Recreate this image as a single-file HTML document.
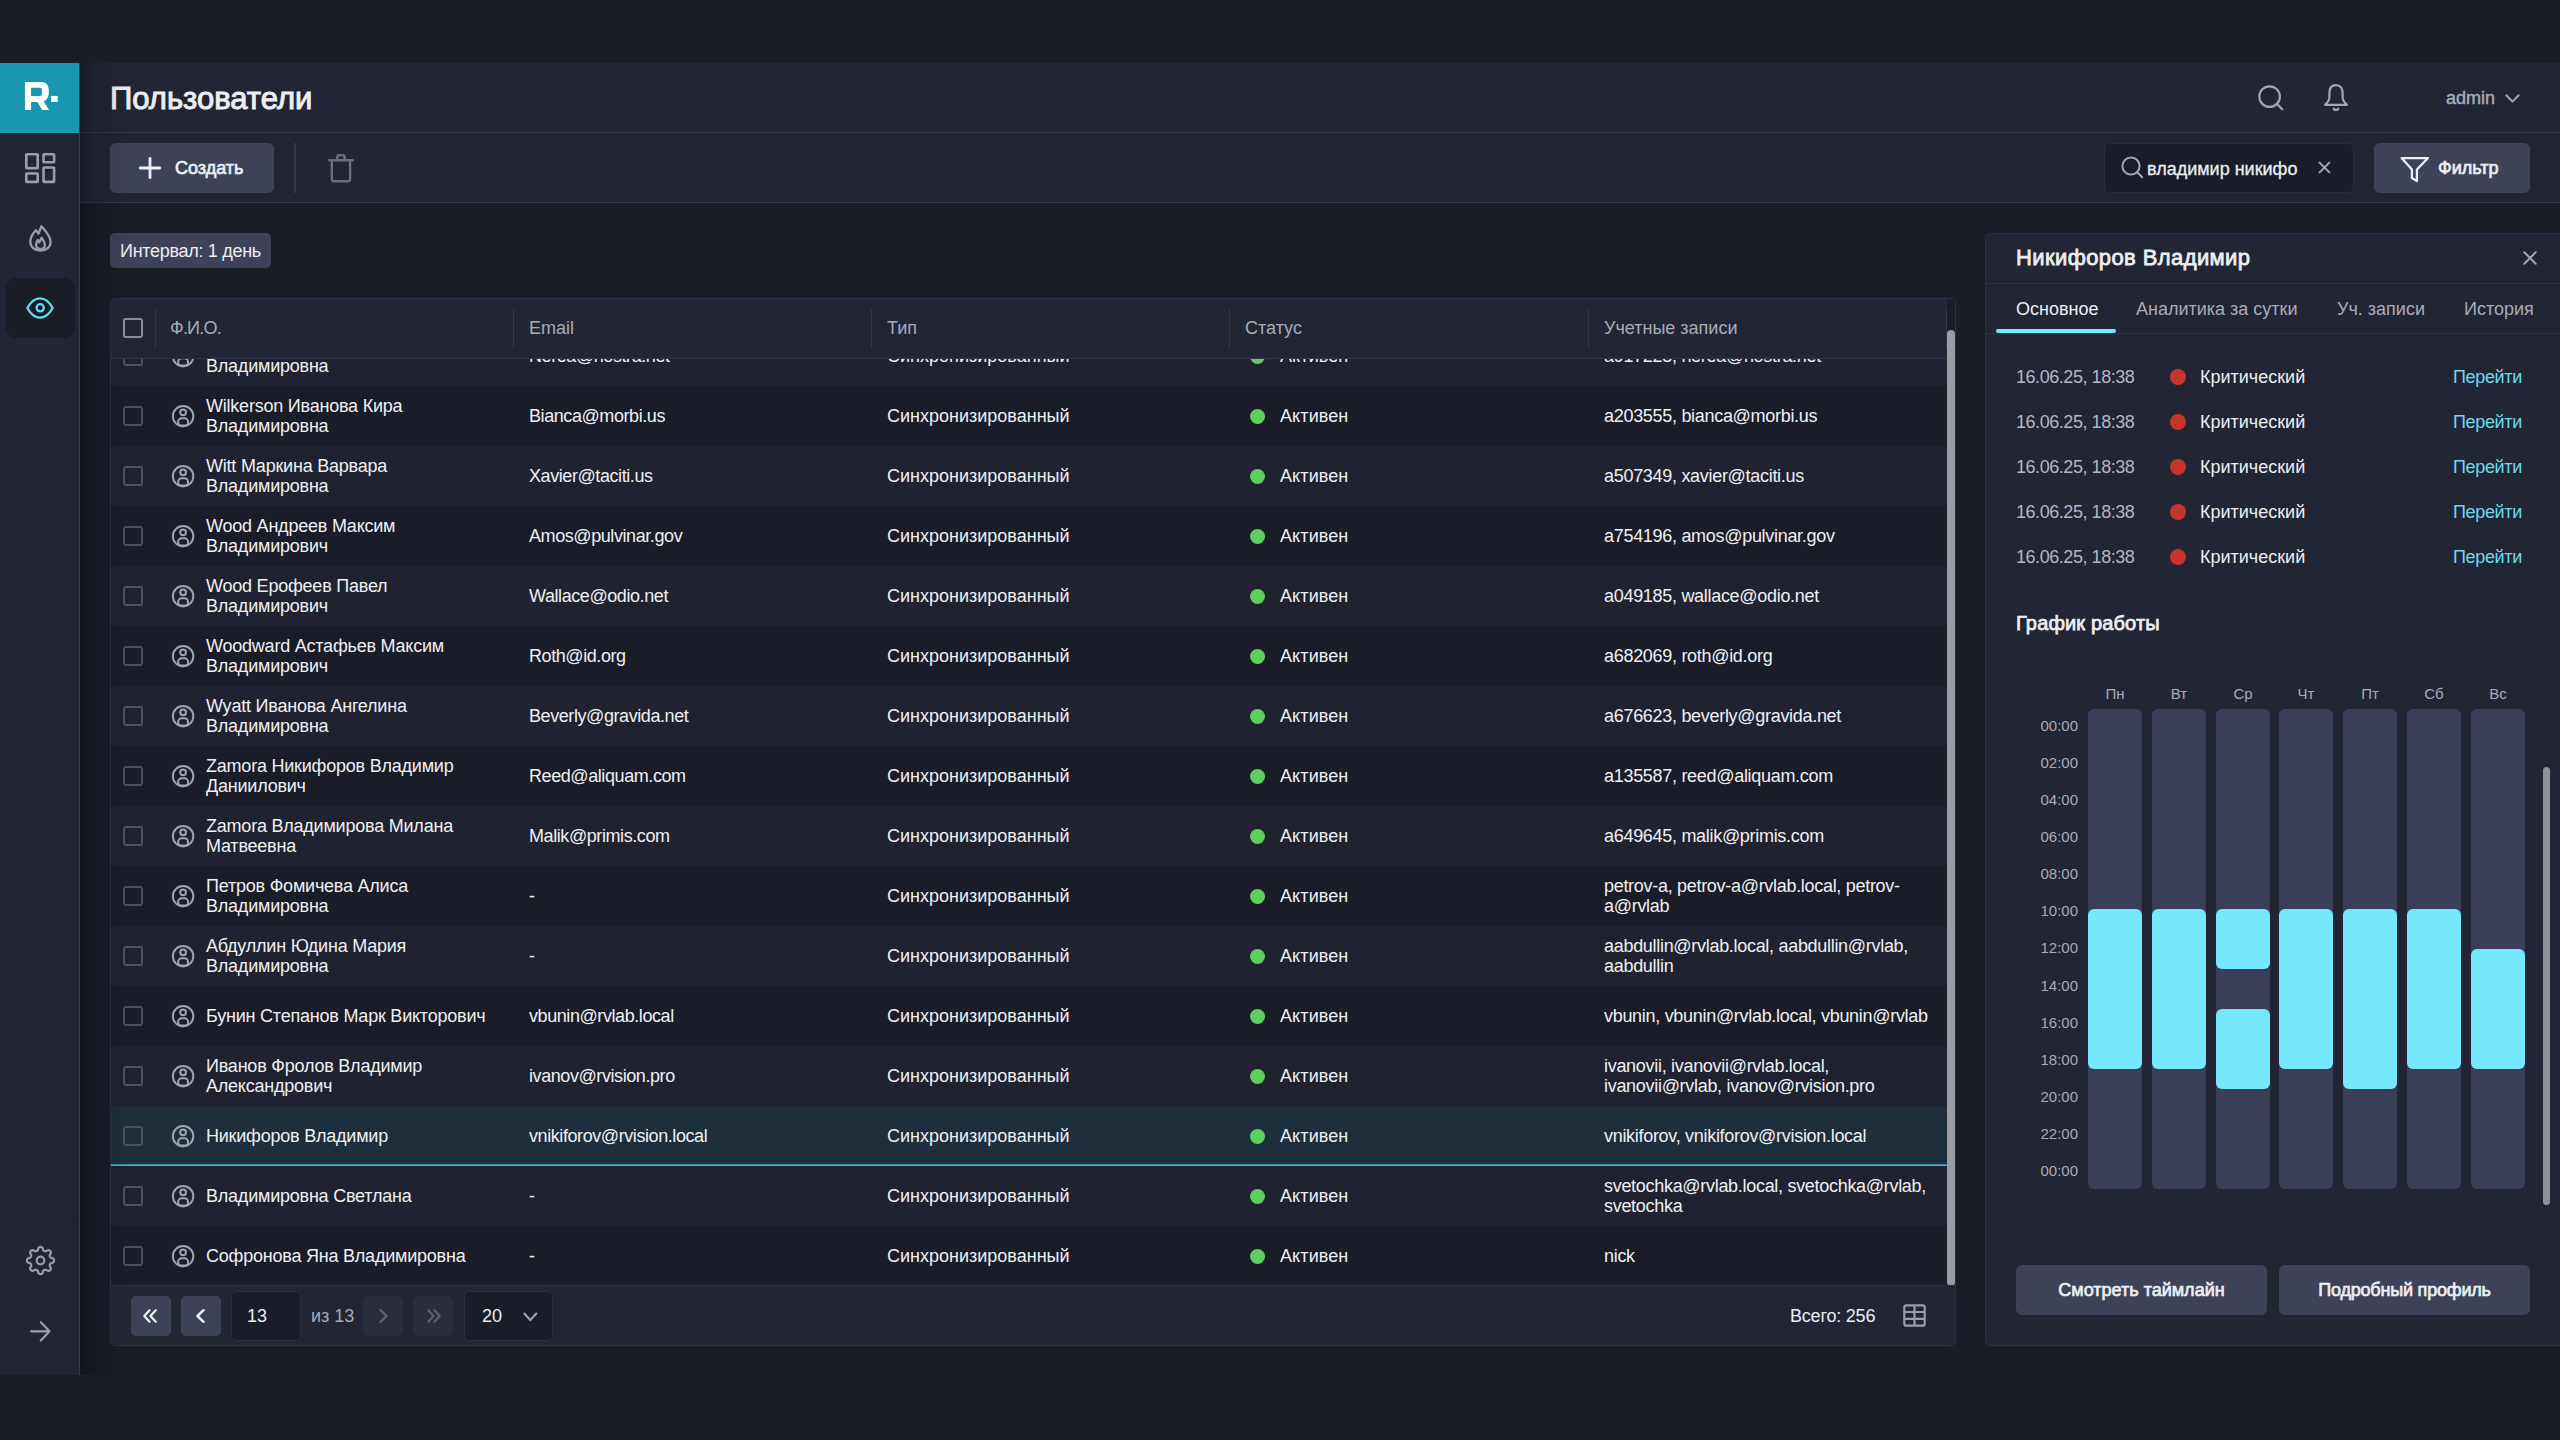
<!DOCTYPE html><html><head><meta charset="utf-8"><style>*{box-sizing:border-box;margin:0;padding:0}
html,body{width:2560px;height:1440px;overflow:hidden;background:#1a1c26;font-family:"Liberation Sans",sans-serif;color:#eceef2}
.abs{position:absolute}
svg{position:absolute;overflow:visible}
.t{position:absolute;white-space:nowrap;line-height:1}
#side{left:0;top:63px;width:80px;height:1312px;background:#222533;border-right:1px solid #363b52}
#logo{left:0;top:63px;width:79px;height:70px;background:#1a97b0}
#hdr{left:80px;top:63px;width:2480px;height:70px;background:#222533;border-bottom:1px solid #323750}
#tb{left:80px;top:133px;width:2480px;height:70px;background:#222533;border-bottom:1px solid #323750}
.btn{position:absolute;background:#3d4259;border-radius:6px}
#tbl{left:110px;top:298px;width:1846px;height:1048px;border:1px solid #2c3044;border-radius:5px;overflow:hidden;background:#20222f}
#rows{position:absolute;left:0;top:28px;width:1836px;height:960px;overflow:hidden}
.row{position:absolute;left:0;width:1836px;height:60px}
.row.d{background:#1a1c27}
.row.l{background:#20222f}
.row.s{background:#1d2e3d}
.row.s:after{content:"";position:absolute;left:0;right:0;bottom:0;height:2px;background:linear-gradient(#2d7f92,#52c4dc)}
.cell{position:absolute;top:0;height:60px;display:flex;align-items:center;font-size:18px;line-height:20px;color:#eff0f3;white-space:nowrap;letter-spacing:-0.2px}
.cb{position:absolute;left:12px;top:20px;width:20px;height:20px;border:2px solid #4d5062;border-radius:3px}
.dot{width:15px;height:15px;border-radius:50%;background:#5fcf5f;margin-right:15px;flex:none}
#thead{position:absolute;left:0;top:0;width:1836px;height:60px;background:#222533;border-bottom:1px solid #323750;z-index:2}
.th{position:absolute;top:0;height:59px;display:flex;align-items:center;font-size:18px;color:#a9abb8}
.vd{position:absolute;top:10px;width:1px;height:40px;background:#323750}
#tfoot{position:absolute;left:0;top:986px;width:1844px;height:60px;background:#222533;border-top:1px solid #2c3044}
#panel{left:1985px;top:233px;width:590px;height:1113px;border:1px solid #2c3044;border-radius:5px;background:#222533}
</style></head><body>
<div class="abs" id="side"></div>
<div class="abs" style="left:0;top:1208px;width:79px;height:20px;background:linear-gradient(rgba(0,0,0,0),rgba(0,0,0,0.07) 70%,rgba(0,0,0,0))"></div>
<div class="abs" id="hdr"></div>
<div class="abs" id="tb"></div>
<div class="abs" id="logo"></div>
<svg style="left:18px;top:76px" width="44" height="40" viewBox="0 0 44 40"><path fill="#fff" fill-rule="evenodd" d="M6.94 6 H23.5 C28.5 6 30.8 9.5 30.8 14.5 V16.5 C30.8 21 28.6 24.3 25.6 25.3 L31.1 34 H24.2 L19.4 26 H13.06 V34 H6.94 Z M13.06 11.7 H21.9 C23.2 11.7 23.9 12.5 23.9 13.7 V17.9 C23.9 19.1 23.2 19.9 21.9 19.9 H13.06 Z"/><rect x="33.2" y="19.9" width="6.5" height="6.1" fill="#fff"/></svg>
<!-- sidebar icons -->
<svg style="left:25px;top:153px" width="30" height="30" viewBox="0 0 30 30" fill="none" stroke="#9a9daa" stroke-width="2.6">
<rect x="1.3" y="1.3" width="11.4" height="13.8" rx="0.6"/><rect x="18.5" y="1.3" width="10.6" height="8" rx="0.6"/>
<rect x="1.3" y="20.5" width="11.4" height="8.4" rx="0.6"/><rect x="18.5" y="14.5" width="10.6" height="14.4" rx="0.6"/>
</svg>
<svg style="left:24px;top:220px" width="34" height="36" viewBox="0 0 34 36" fill="none" stroke="#9a9daa" stroke-width="2.3" stroke-linejoin="round">
<path d="M17.5 6.3 C21.5 11 26.6 16.2 26.6 21.8 C26.6 27.2 22.4 30.6 16.5 30.6 C10.6 30.6 6.3 27.2 6.3 21.8 C6.3 17.2 8.6 13.6 11.9 10.2 L14.4 13.7 Z"/>
<path d="M17.6 17.7 C19.4 19.9 20.8 22.5 20.8 25 C20.8 27.6 19.2 29 16.5 29 C13.8 29 12.1 27.4 12.1 25 C12.1 23.2 12.7 21.6 13.8 20 L15.4 22.2 Z"/>
</svg>
<div class="abs" style="left:6px;top:278px;width:69px;height:60px;background:#1a1c26;border-radius:10px"></div>
<svg style="left:26px;top:297px" width="28" height="22" viewBox="0 0 28 22" fill="none" stroke="#5fdcf2" stroke-width="2.3">
<path d="M1.3 11 C5 4.3 9.2 1.3 14 1.3 C18.8 1.3 23 4.3 26.7 11 C23 17.7 18.8 20.7 14 20.7 C9.2 20.7 5 17.7 1.3 11 Z"/>
<circle cx="14.2" cy="10.8" r="3.6"/>
</svg>
<svg style="left:25px;top:1245px" width="31" height="31" viewBox="-15.5 -15.5 31 31" fill="none" stroke="#9a9daa" stroke-width="2.2" stroke-linejoin="round">
<path d="M0.00 -13.60 L0.53 -13.54 L1.05 -13.37 L1.55 -13.08 L2.00 -12.63 L2.32 -11.67 L2.57 -10.70 L2.89 -10.23 L3.21 -9.88 L3.55 -9.61 L3.90 -9.42 L4.29 -9.31 L4.72 -9.25 L5.19 -9.28 L5.75 -9.39 L6.61 -9.89 L7.52 -10.35 L8.15 -10.34 L8.71 -10.20 L9.20 -9.95 L9.62 -9.62 L9.95 -9.20 L10.20 -8.71 L10.34 -8.15 L10.35 -7.52 L9.89 -6.61 L9.39 -5.75 L9.28 -5.19 L9.25 -4.72 L9.31 -4.29 L9.42 -3.90 L9.61 -3.55 L9.88 -3.21 L10.23 -2.89 L10.70 -2.57 L11.67 -2.32 L12.63 -2.00 L13.08 -1.55 L13.37 -1.05 L13.54 -0.53 L13.60 0.00 L13.54 0.53 L13.37 1.05 L13.08 1.55 L12.63 2.00 L11.67 2.32 L10.70 2.57 L10.23 2.89 L9.88 3.21 L9.61 3.55 L9.42 3.90 L9.31 4.29 L9.25 4.72 L9.28 5.19 L9.39 5.75 L9.89 6.61 L10.35 7.52 L10.34 8.15 L10.20 8.71 L9.95 9.20 L9.62 9.62 L9.20 9.95 L8.71 10.20 L8.15 10.34 L7.52 10.35 L6.61 9.89 L5.75 9.39 L5.19 9.28 L4.72 9.25 L4.29 9.31 L3.90 9.42 L3.55 9.61 L3.21 9.88 L2.89 10.23 L2.57 10.70 L2.32 11.67 L2.00 12.63 L1.55 13.08 L1.05 13.37 L0.53 13.54 L0.00 13.60 L-0.53 13.54 L-1.05 13.37 L-1.55 13.08 L-2.00 12.63 L-2.32 11.67 L-2.57 10.70 L-2.89 10.23 L-3.21 9.88 L-3.55 9.61 L-3.90 9.42 L-4.29 9.31 L-4.72 9.25 L-5.19 9.28 L-5.75 9.39 L-6.61 9.89 L-7.52 10.35 L-8.15 10.34 L-8.71 10.20 L-9.20 9.95 L-9.62 9.62 L-9.95 9.20 L-10.20 8.71 L-10.34 8.15 L-10.35 7.52 L-9.89 6.61 L-9.39 5.75 L-9.28 5.19 L-9.25 4.72 L-9.31 4.29 L-9.42 3.90 L-9.61 3.55 L-9.88 3.21 L-10.23 2.89 L-10.70 2.57 L-11.67 2.32 L-12.63 2.00 L-13.08 1.55 L-13.37 1.05 L-13.54 0.53 L-13.60 0.00 L-13.54 -0.53 L-13.37 -1.05 L-13.08 -1.55 L-12.63 -2.00 L-11.67 -2.32 L-10.70 -2.57 L-10.23 -2.89 L-9.88 -3.21 L-9.61 -3.55 L-9.42 -3.90 L-9.31 -4.29 L-9.25 -4.72 L-9.28 -5.19 L-9.39 -5.75 L-9.89 -6.61 L-10.35 -7.52 L-10.34 -8.15 L-10.20 -8.71 L-9.95 -9.20 L-9.62 -9.62 L-9.20 -9.95 L-8.71 -10.20 L-8.15 -10.34 L-7.52 -10.35 L-6.61 -9.89 L-5.75 -9.39 L-5.19 -9.28 L-4.72 -9.25 L-4.29 -9.31 L-3.90 -9.42 L-3.55 -9.61 L-3.21 -9.88 L-2.89 -10.23 L-2.57 -10.70 L-2.32 -11.67 L-2.00 -12.63 L-1.55 -13.08 L-1.05 -13.37 L-0.53 -13.54 L-0.00 -13.60 Z"/>
<circle cx="0" cy="0" r="3.8"/>
</svg>
<svg style="left:30px;top:1321px" width="21" height="21" viewBox="0 0 21 21" fill="none" stroke="#9a9daa" stroke-width="2.2" stroke-linecap="round" stroke-linejoin="round">
<path d="M1.2 10.3 H19.5 M10.8 1.3 L19.6 10.3 L10.8 19.6"/>
</svg>
<!-- header -->
<div class="t" style="left:110px;top:83px;font-size:31px;font-weight:400;color:#eceef2;-webkit-text-stroke:1px #eceef2;letter-spacing:0px">Пользователи</div>
<svg style="left:2257px;top:84px" width="28" height="28" viewBox="0 0 28 28" fill="none" stroke="#a3a5b2" stroke-width="2.2" stroke-linecap="round">
<circle cx="12.6" cy="12.6" r="10.3"/><path d="M20 20 L25.2 25.2"/>
</svg>
<svg style="left:2322px;top:83px" width="28" height="30" viewBox="0 0 28 30" fill="none" stroke="#a3a5b2" stroke-width="2.2" stroke-linejoin="round" stroke-linecap="round">
<path d="M14 2.2 C9.6 2.2 7.4 5.4 7.4 10.2 V14.2 C7.4 17 6.2 19 3 21.8 H25 C21.8 19 20.6 17 20.6 14.2 V10.2 C20.6 5.4 18.4 2.2 14 2.2 Z"/>
<path d="M11.6 25.6 C12.6 27.4 15.4 27.4 16.4 25.6"/>
</svg>
<div class="t" style="left:2446px;top:89px;font-size:18px;font-weight:400;color:#a9abb8;-webkit-text-stroke:0.45px #a9abb8">admin</div>
<svg style="left:2505px;top:94px" width="15" height="9" viewBox="0 0 15 9" fill="none" stroke="#a3a5b2" stroke-width="2" stroke-linecap="round" stroke-linejoin="round">
<path d="M1.3 1.3 L7.5 7.6 L13.7 1.3"/>
</svg>
<!-- toolbar -->
<div class="btn" style="left:110px;top:143px;width:164px;height:50px"></div>
<svg style="left:139px;top:157px" width="22" height="22" viewBox="0 0 22 22" fill="none" stroke="#eceef2" stroke-width="2.8" stroke-linecap="round">
<path d="M11 1.3 V20.7 M1.3 11 H20.7"/>
</svg>
<div class="t" style="left:175px;top:159px;font-size:18px;font-weight:400;color:#eceef2;-webkit-text-stroke:0.7px #eceef2">Создать</div>
<div class="abs" style="left:294px;top:143px;width:2px;height:50px;background:#323750"></div>
<svg style="left:327px;top:153px" width="28" height="30" viewBox="0 0 28 30" fill="none" stroke="#6b6e7e" stroke-width="2.4" stroke-linejoin="round" stroke-linecap="round">
<path d="M2.2 7.2 H25.8 M10.3 7.2 V4 C10.3 2.6 10.9 2.2 12 2.2 H16 C17.1 2.2 17.7 2.6 17.7 4 V7.2 M4.8 7.2 V26 C4.8 27.4 5.5 28.2 6.9 28.2 H21 C22.4 28.2 23.1 27.4 23.1 26 V7.2"/>
</svg>
<div class="abs" style="left:2104px;top:143px;width:250px;height:50px;background:#1a1c27;border:1px solid #2a2d3c;border-radius:5px"></div>
<svg style="left:2121px;top:156px" width="23" height="23" viewBox="0 0 23 23" fill="none" stroke="#a3a5b2" stroke-width="2" stroke-linecap="round">
<circle cx="10" cy="10" r="8.6"/><path d="M16.2 16.2 L21.2 21.2"/>
</svg>
<div class="t" style="left:2147px;top:160px;font-size:18px;color:#eceef2;-webkit-text-stroke:0.3px #eceef2">владимир никифо</div>
<svg style="left:2318px;top:161px" width="13" height="13" viewBox="0 0 13 13" fill="none" stroke="#a3a5b2" stroke-width="2" stroke-linecap="round">
<path d="M1.6 1.6 L11.4 11.4 M11.4 1.6 L1.6 11.4"/>
</svg>
<div class="btn" style="left:2374px;top:143px;width:156px;height:50px"></div>
<svg style="left:2400px;top:156px" width="29" height="27" viewBox="0 0 29 27" fill="none" stroke="#eceef2" stroke-width="2.3" stroke-linejoin="round">
<path d="M1.6 2.05 H28 L16.9 13.5 V25.1 L11.9 22 V13.5 Z"/>
</svg>
<div class="t" style="left:2438px;top:159px;font-size:18px;font-weight:400;color:#eceef2;-webkit-text-stroke:0.7px #eceef2">Фильтр</div>
<!-- chip -->
<div class="abs" style="left:110px;top:233px;width:161px;height:35px;background:#3d4259;border-radius:5px"></div>
<div class="t" style="left:120px;top:242px;font-size:18px;color:#eceef2;letter-spacing:-0.3px">Интервал: 1 день</div>

<div class="abs" id="tbl">
<div id="rows" style="top:0;height:986px">
<div class="row l" style="top:27px">
<div class="cb"></div><svg style="left:61px;top:19px" width="23" height="23" viewBox="0 0 23 23" fill="none" stroke="#a0a3b1" stroke-width="2"><circle cx="11.1" cy="11.2" r="10.2"/><circle cx="11.1" cy="7.3" r="2.9"/><rect x="6.1" y="13.3" width="10" height="7.2" rx="3.6"/></svg>
<div class="cell" style="left:95px;letter-spacing:-0.22px">Whitney Романова Ольга<br>Владимировна</div>
<div class="cell" style="left:418px;letter-spacing:-0.42px">Nerea@nostra.net</div>
<div class="cell" style="left:776px;letter-spacing:0">Синхронизированный</div>
<div class="cell" style="left:1139px;letter-spacing:0.1px"><span class="dot"></span>Активен</div>
<div class="cell" style="left:1493px;letter-spacing:-0.3px">a917223, nerea@nostra.net</div>
</div>
<div class="row d" style="top:87px">
<div class="cb"></div><svg style="left:61px;top:19px" width="23" height="23" viewBox="0 0 23 23" fill="none" stroke="#a0a3b1" stroke-width="2"><circle cx="11.1" cy="11.2" r="10.2"/><circle cx="11.1" cy="7.3" r="2.9"/><rect x="6.1" y="13.3" width="10" height="7.2" rx="3.6"/></svg>
<div class="cell" style="left:95px;letter-spacing:-0.22px">Wilkerson Иванова Кира<br>Владимировна</div>
<div class="cell" style="left:418px;letter-spacing:-0.42px">Bianca@morbi.us</div>
<div class="cell" style="left:776px;letter-spacing:0">Синхронизированный</div>
<div class="cell" style="left:1139px;letter-spacing:0.1px"><span class="dot"></span>Активен</div>
<div class="cell" style="left:1493px;letter-spacing:-0.3px">a203555, bianca@morbi.us</div>
</div>
<div class="row l" style="top:147px">
<div class="cb"></div><svg style="left:61px;top:19px" width="23" height="23" viewBox="0 0 23 23" fill="none" stroke="#a0a3b1" stroke-width="2"><circle cx="11.1" cy="11.2" r="10.2"/><circle cx="11.1" cy="7.3" r="2.9"/><rect x="6.1" y="13.3" width="10" height="7.2" rx="3.6"/></svg>
<div class="cell" style="left:95px;letter-spacing:-0.22px">Witt Маркина Варвара<br>Владимировна</div>
<div class="cell" style="left:418px;letter-spacing:-0.42px">Xavier@taciti.us</div>
<div class="cell" style="left:776px;letter-spacing:0">Синхронизированный</div>
<div class="cell" style="left:1139px;letter-spacing:0.1px"><span class="dot"></span>Активен</div>
<div class="cell" style="left:1493px;letter-spacing:-0.3px">a507349, xavier@taciti.us</div>
</div>
<div class="row d" style="top:207px">
<div class="cb"></div><svg style="left:61px;top:19px" width="23" height="23" viewBox="0 0 23 23" fill="none" stroke="#a0a3b1" stroke-width="2"><circle cx="11.1" cy="11.2" r="10.2"/><circle cx="11.1" cy="7.3" r="2.9"/><rect x="6.1" y="13.3" width="10" height="7.2" rx="3.6"/></svg>
<div class="cell" style="left:95px;letter-spacing:-0.22px">Wood Андреев Максим<br>Владимирович</div>
<div class="cell" style="left:418px;letter-spacing:-0.42px">Amos@pulvinar.gov</div>
<div class="cell" style="left:776px;letter-spacing:0">Синхронизированный</div>
<div class="cell" style="left:1139px;letter-spacing:0.1px"><span class="dot"></span>Активен</div>
<div class="cell" style="left:1493px;letter-spacing:-0.3px">a754196, amos@pulvinar.gov</div>
</div>
<div class="row l" style="top:267px">
<div class="cb"></div><svg style="left:61px;top:19px" width="23" height="23" viewBox="0 0 23 23" fill="none" stroke="#a0a3b1" stroke-width="2"><circle cx="11.1" cy="11.2" r="10.2"/><circle cx="11.1" cy="7.3" r="2.9"/><rect x="6.1" y="13.3" width="10" height="7.2" rx="3.6"/></svg>
<div class="cell" style="left:95px;letter-spacing:-0.22px">Wood Ерофеев Павел<br>Владимирович</div>
<div class="cell" style="left:418px;letter-spacing:-0.42px">Wallace@odio.net</div>
<div class="cell" style="left:776px;letter-spacing:0">Синхронизированный</div>
<div class="cell" style="left:1139px;letter-spacing:0.1px"><span class="dot"></span>Активен</div>
<div class="cell" style="left:1493px;letter-spacing:-0.3px">a049185, wallace@odio.net</div>
</div>
<div class="row d" style="top:327px">
<div class="cb"></div><svg style="left:61px;top:19px" width="23" height="23" viewBox="0 0 23 23" fill="none" stroke="#a0a3b1" stroke-width="2"><circle cx="11.1" cy="11.2" r="10.2"/><circle cx="11.1" cy="7.3" r="2.9"/><rect x="6.1" y="13.3" width="10" height="7.2" rx="3.6"/></svg>
<div class="cell" style="left:95px;letter-spacing:-0.22px">Woodward Астафьев Максим<br>Владимирович</div>
<div class="cell" style="left:418px;letter-spacing:-0.42px">Roth@id.org</div>
<div class="cell" style="left:776px;letter-spacing:0">Синхронизированный</div>
<div class="cell" style="left:1139px;letter-spacing:0.1px"><span class="dot"></span>Активен</div>
<div class="cell" style="left:1493px;letter-spacing:-0.3px">a682069, roth@id.org</div>
</div>
<div class="row l" style="top:387px">
<div class="cb"></div><svg style="left:61px;top:19px" width="23" height="23" viewBox="0 0 23 23" fill="none" stroke="#a0a3b1" stroke-width="2"><circle cx="11.1" cy="11.2" r="10.2"/><circle cx="11.1" cy="7.3" r="2.9"/><rect x="6.1" y="13.3" width="10" height="7.2" rx="3.6"/></svg>
<div class="cell" style="left:95px;letter-spacing:-0.22px">Wyatt Иванова Ангелина<br>Владимировна</div>
<div class="cell" style="left:418px;letter-spacing:-0.42px">Beverly@gravida.net</div>
<div class="cell" style="left:776px;letter-spacing:0">Синхронизированный</div>
<div class="cell" style="left:1139px;letter-spacing:0.1px"><span class="dot"></span>Активен</div>
<div class="cell" style="left:1493px;letter-spacing:-0.3px">a676623, beverly@gravida.net</div>
</div>
<div class="row d" style="top:447px">
<div class="cb"></div><svg style="left:61px;top:19px" width="23" height="23" viewBox="0 0 23 23" fill="none" stroke="#a0a3b1" stroke-width="2"><circle cx="11.1" cy="11.2" r="10.2"/><circle cx="11.1" cy="7.3" r="2.9"/><rect x="6.1" y="13.3" width="10" height="7.2" rx="3.6"/></svg>
<div class="cell" style="left:95px;letter-spacing:-0.22px">Zamora Никифоров Владимир<br>Даниилович</div>
<div class="cell" style="left:418px;letter-spacing:-0.42px">Reed@aliquam.com</div>
<div class="cell" style="left:776px;letter-spacing:0">Синхронизированный</div>
<div class="cell" style="left:1139px;letter-spacing:0.1px"><span class="dot"></span>Активен</div>
<div class="cell" style="left:1493px;letter-spacing:-0.3px">a135587, reed@aliquam.com</div>
</div>
<div class="row l" style="top:507px">
<div class="cb"></div><svg style="left:61px;top:19px" width="23" height="23" viewBox="0 0 23 23" fill="none" stroke="#a0a3b1" stroke-width="2"><circle cx="11.1" cy="11.2" r="10.2"/><circle cx="11.1" cy="7.3" r="2.9"/><rect x="6.1" y="13.3" width="10" height="7.2" rx="3.6"/></svg>
<div class="cell" style="left:95px;letter-spacing:-0.22px">Zamora Владимирова Милана<br>Матвеевна</div>
<div class="cell" style="left:418px;letter-spacing:-0.42px">Malik@primis.com</div>
<div class="cell" style="left:776px;letter-spacing:0">Синхронизированный</div>
<div class="cell" style="left:1139px;letter-spacing:0.1px"><span class="dot"></span>Активен</div>
<div class="cell" style="left:1493px;letter-spacing:-0.3px">a649645, malik@primis.com</div>
</div>
<div class="row d" style="top:567px">
<div class="cb"></div><svg style="left:61px;top:19px" width="23" height="23" viewBox="0 0 23 23" fill="none" stroke="#a0a3b1" stroke-width="2"><circle cx="11.1" cy="11.2" r="10.2"/><circle cx="11.1" cy="7.3" r="2.9"/><rect x="6.1" y="13.3" width="10" height="7.2" rx="3.6"/></svg>
<div class="cell" style="left:95px;letter-spacing:-0.22px">Петров Фомичева Алиса<br>Владимировна</div>
<div class="cell" style="left:418px;letter-spacing:-0.42px">-</div>
<div class="cell" style="left:776px;letter-spacing:0">Синхронизированный</div>
<div class="cell" style="left:1139px;letter-spacing:0.1px"><span class="dot"></span>Активен</div>
<div class="cell" style="left:1493px;letter-spacing:-0.3px">petrov-a, petrov-a@rvlab.local, petrov-<br>a@rvlab</div>
</div>
<div class="row l" style="top:627px">
<div class="cb"></div><svg style="left:61px;top:19px" width="23" height="23" viewBox="0 0 23 23" fill="none" stroke="#a0a3b1" stroke-width="2"><circle cx="11.1" cy="11.2" r="10.2"/><circle cx="11.1" cy="7.3" r="2.9"/><rect x="6.1" y="13.3" width="10" height="7.2" rx="3.6"/></svg>
<div class="cell" style="left:95px;letter-spacing:-0.22px">Абдуллин Юдина Мария<br>Владимировна</div>
<div class="cell" style="left:418px;letter-spacing:-0.42px">-</div>
<div class="cell" style="left:776px;letter-spacing:0">Синхронизированный</div>
<div class="cell" style="left:1139px;letter-spacing:0.1px"><span class="dot"></span>Активен</div>
<div class="cell" style="left:1493px;letter-spacing:-0.3px">aabdullin@rvlab.local, aabdullin@rvlab,<br>aabdullin</div>
</div>
<div class="row d" style="top:687px">
<div class="cb"></div><svg style="left:61px;top:19px" width="23" height="23" viewBox="0 0 23 23" fill="none" stroke="#a0a3b1" stroke-width="2"><circle cx="11.1" cy="11.2" r="10.2"/><circle cx="11.1" cy="7.3" r="2.9"/><rect x="6.1" y="13.3" width="10" height="7.2" rx="3.6"/></svg>
<div class="cell" style="left:95px;letter-spacing:-0.22px">Бунин Степанов Марк Викторович</div>
<div class="cell" style="left:418px;letter-spacing:-0.42px">vbunin@rvlab.local</div>
<div class="cell" style="left:776px;letter-spacing:0">Синхронизированный</div>
<div class="cell" style="left:1139px;letter-spacing:0.1px"><span class="dot"></span>Активен</div>
<div class="cell" style="left:1493px;letter-spacing:-0.3px">vbunin, vbunin@rvlab.local, vbunin@rvlab</div>
</div>
<div class="row l" style="top:747px">
<div class="cb"></div><svg style="left:61px;top:19px" width="23" height="23" viewBox="0 0 23 23" fill="none" stroke="#a0a3b1" stroke-width="2"><circle cx="11.1" cy="11.2" r="10.2"/><circle cx="11.1" cy="7.3" r="2.9"/><rect x="6.1" y="13.3" width="10" height="7.2" rx="3.6"/></svg>
<div class="cell" style="left:95px;letter-spacing:-0.22px">Иванов Фролов Владимир<br>Александрович</div>
<div class="cell" style="left:418px;letter-spacing:-0.42px">ivanov@rvision.pro</div>
<div class="cell" style="left:776px;letter-spacing:0">Синхронизированный</div>
<div class="cell" style="left:1139px;letter-spacing:0.1px"><span class="dot"></span>Активен</div>
<div class="cell" style="left:1493px;letter-spacing:-0.3px">ivanovii, ivanovii@rvlab.local,<br>ivanovii@rvlab, ivanov@rvision.pro</div>
</div>
<div class="row s" style="top:807px">
<div class="cb"></div><svg style="left:61px;top:19px" width="23" height="23" viewBox="0 0 23 23" fill="none" stroke="#a0a3b1" stroke-width="2"><circle cx="11.1" cy="11.2" r="10.2"/><circle cx="11.1" cy="7.3" r="2.9"/><rect x="6.1" y="13.3" width="10" height="7.2" rx="3.6"/></svg>
<div class="cell" style="left:95px;letter-spacing:-0.22px">Никифоров Владимир</div>
<div class="cell" style="left:418px;letter-spacing:-0.42px">vnikiforov@rvision.local</div>
<div class="cell" style="left:776px;letter-spacing:0">Синхронизированный</div>
<div class="cell" style="left:1139px;letter-spacing:0.1px"><span class="dot"></span>Активен</div>
<div class="cell" style="left:1493px;letter-spacing:-0.3px">vnikiforov, vnikiforov@rvision.local</div>
</div>
<div class="row l" style="top:867px">
<div class="cb"></div><svg style="left:61px;top:19px" width="23" height="23" viewBox="0 0 23 23" fill="none" stroke="#a0a3b1" stroke-width="2"><circle cx="11.1" cy="11.2" r="10.2"/><circle cx="11.1" cy="7.3" r="2.9"/><rect x="6.1" y="13.3" width="10" height="7.2" rx="3.6"/></svg>
<div class="cell" style="left:95px;letter-spacing:-0.22px">Владимировна Светлана</div>
<div class="cell" style="left:418px;letter-spacing:-0.42px">-</div>
<div class="cell" style="left:776px;letter-spacing:0">Синхронизированный</div>
<div class="cell" style="left:1139px;letter-spacing:0.1px"><span class="dot"></span>Активен</div>
<div class="cell" style="left:1493px;letter-spacing:-0.3px">svetochka@rvlab.local, svetochka@rvlab,<br>svetochka</div>
</div>
<div class="row d" style="top:927px">
<div class="cb"></div><svg style="left:61px;top:19px" width="23" height="23" viewBox="0 0 23 23" fill="none" stroke="#a0a3b1" stroke-width="2"><circle cx="11.1" cy="11.2" r="10.2"/><circle cx="11.1" cy="7.3" r="2.9"/><rect x="6.1" y="13.3" width="10" height="7.2" rx="3.6"/></svg>
<div class="cell" style="left:95px;letter-spacing:-0.22px">Софронова Яна Владимировна</div>
<div class="cell" style="left:418px;letter-spacing:-0.42px">-</div>
<div class="cell" style="left:776px;letter-spacing:0">Синхронизированный</div>
<div class="cell" style="left:1139px;letter-spacing:0.1px"><span class="dot"></span>Активен</div>
<div class="cell" style="left:1493px;letter-spacing:-0.3px">nick</div>
</div>
</div>
<div id="thead">
<div class="cb" style="left:12px;top:19px;border-color:#8a8d9c"></div>
<div class="vd" style="left:44px"></div>
<div class="th" style="left:59px;letter-spacing:-0.8px">Ф.И.О.</div>
<div class="vd" style="left:402px"></div>
<div class="th" style="left:418px">Email</div>
<div class="vd" style="left:760px"></div>
<div class="th" style="left:776px">Тип</div>
<div class="vd" style="left:1118px"></div>
<div class="th" style="left:1134px">Статус</div>
<div class="vd" style="left:1477px"></div>
<div class="th" style="left:1493px">Учетные записи</div>
<div class="vd" style="left:1835px"></div>
</div>
<div class="abs" style="left:1836px;top:0;width:8px;height:987px;background:#1a1c26"></div>
<div class="abs" style="left:1836px;top:31px;width:8px;height:956px;background:#9a9ca3;border-radius:4px"></div>
<div id="tfoot"></div>
</div>


<div class="abs" id="panel"></div>
<div class="t" style="left:2016px;top:247px;font-size:22px;font-weight:400;color:#eceef2;-webkit-text-stroke:0.8px #eceef2;letter-spacing:0.4px">Никифоров Владимир</div>
<svg style="left:2523px;top:251px" width="14" height="14" viewBox="0 0 14 14" fill="none" stroke="#a3a5b2" stroke-width="2" stroke-linecap="round"><path d="M1.3 1.3 L12.7 12.7 M12.7 1.3 L1.3 12.7"/></svg>
<div class="abs" style="left:1986px;top:283px;width:574px;height:1px;background:#2f3347"></div>
<div class="t" style="left:2016px;top:300px;font-size:18px;color:#eceef2">Основное</div>
<div class="t" style="left:2136px;top:300px;font-size:18px;color:#a9abb8">Аналитика за сутки</div>
<div class="t" style="left:2337px;top:300px;font-size:18px;color:#a9abb8">Уч. записи</div>
<div class="t" style="left:2464px;top:300px;font-size:18px;color:#a9abb8">История</div>
<div class="abs" style="left:1986px;top:333px;width:574px;height:1px;background:#2f3347"></div>
<div class="abs" style="left:1996px;top:329px;width:120px;height:4px;background:#76e8fd;border-radius:2px"></div>
<div class="t" style="left:2016px;top:368px;font-size:18px;color:#b4b6c1;letter-spacing:-0.45px">16.06.25, 18:38</div>
<div class="abs" style="left:2170px;top:369px;width:16px;height:16px;border-radius:50%;background:#c5352c"></div>
<div class="t" style="left:2200px;top:368px;font-size:18px;color:#eceef2">Критический</div>
<div class="t" style="left:2453px;top:368px;font-size:18px;color:#6ed8f0;letter-spacing:-0.35px">Перейти</div>
<div class="t" style="left:2016px;top:413px;font-size:18px;color:#b4b6c1;letter-spacing:-0.45px">16.06.25, 18:38</div>
<div class="abs" style="left:2170px;top:414px;width:16px;height:16px;border-radius:50%;background:#c5352c"></div>
<div class="t" style="left:2200px;top:413px;font-size:18px;color:#eceef2">Критический</div>
<div class="t" style="left:2453px;top:413px;font-size:18px;color:#6ed8f0;letter-spacing:-0.35px">Перейти</div>
<div class="t" style="left:2016px;top:458px;font-size:18px;color:#b4b6c1;letter-spacing:-0.45px">16.06.25, 18:38</div>
<div class="abs" style="left:2170px;top:459px;width:16px;height:16px;border-radius:50%;background:#c5352c"></div>
<div class="t" style="left:2200px;top:458px;font-size:18px;color:#eceef2">Критический</div>
<div class="t" style="left:2453px;top:458px;font-size:18px;color:#6ed8f0;letter-spacing:-0.35px">Перейти</div>
<div class="t" style="left:2016px;top:503px;font-size:18px;color:#b4b6c1;letter-spacing:-0.45px">16.06.25, 18:38</div>
<div class="abs" style="left:2170px;top:504px;width:16px;height:16px;border-radius:50%;background:#c5352c"></div>
<div class="t" style="left:2200px;top:503px;font-size:18px;color:#eceef2">Критический</div>
<div class="t" style="left:2453px;top:503px;font-size:18px;color:#6ed8f0;letter-spacing:-0.35px">Перейти</div>
<div class="t" style="left:2016px;top:548px;font-size:18px;color:#b4b6c1;letter-spacing:-0.45px">16.06.25, 18:38</div>
<div class="abs" style="left:2170px;top:549px;width:16px;height:16px;border-radius:50%;background:#c5352c"></div>
<div class="t" style="left:2200px;top:548px;font-size:18px;color:#eceef2">Критический</div>
<div class="t" style="left:2453px;top:548px;font-size:18px;color:#6ed8f0;letter-spacing:-0.35px">Перейти</div>
<div class="t" style="left:2016px;top:613px;font-size:20px;font-weight:400;color:#eceef2;-webkit-text-stroke:0.75px #eceef2;letter-spacing:0.15px">График работы</div>
<div class="t" style="left:2088px;width:54px;text-align:center;top:686px;font-size:15px;color:#a9abb8">Пн</div>
<div class="abs" style="left:2088px;top:709px;width:54px;height:480px;background:#3a3e58;border-radius:6px"></div>
<div class="abs" style="left:2088px;top:909px;width:54px;height:160px;background:#76e8fd;border-radius:6px"></div>
<div class="t" style="left:2152px;width:54px;text-align:center;top:686px;font-size:15px;color:#a9abb8">Вт</div>
<div class="abs" style="left:2152px;top:709px;width:54px;height:480px;background:#3a3e58;border-radius:6px"></div>
<div class="abs" style="left:2152px;top:909px;width:54px;height:160px;background:#76e8fd;border-radius:6px"></div>
<div class="t" style="left:2216px;width:54px;text-align:center;top:686px;font-size:15px;color:#a9abb8">Ср</div>
<div class="abs" style="left:2216px;top:709px;width:54px;height:480px;background:#3a3e58;border-radius:6px"></div>
<div class="abs" style="left:2216px;top:909px;width:54px;height:60px;background:#76e8fd;border-radius:6px"></div>
<div class="abs" style="left:2216px;top:1009px;width:54px;height:80px;background:#76e8fd;border-radius:6px"></div>
<div class="t" style="left:2279px;width:54px;text-align:center;top:686px;font-size:15px;color:#a9abb8">Чт</div>
<div class="abs" style="left:2279px;top:709px;width:54px;height:480px;background:#3a3e58;border-radius:6px"></div>
<div class="abs" style="left:2279px;top:909px;width:54px;height:160px;background:#76e8fd;border-radius:6px"></div>
<div class="t" style="left:2343px;width:54px;text-align:center;top:686px;font-size:15px;color:#a9abb8">Пт</div>
<div class="abs" style="left:2343px;top:709px;width:54px;height:480px;background:#3a3e58;border-radius:6px"></div>
<div class="abs" style="left:2343px;top:909px;width:54px;height:180px;background:#76e8fd;border-radius:6px"></div>
<div class="t" style="left:2407px;width:54px;text-align:center;top:686px;font-size:15px;color:#a9abb8">Сб</div>
<div class="abs" style="left:2407px;top:709px;width:54px;height:480px;background:#3a3e58;border-radius:6px"></div>
<div class="abs" style="left:2407px;top:909px;width:54px;height:160px;background:#76e8fd;border-radius:6px"></div>
<div class="t" style="left:2471px;width:54px;text-align:center;top:686px;font-size:15px;color:#a9abb8">Вс</div>
<div class="abs" style="left:2471px;top:709px;width:54px;height:480px;background:#3a3e58;border-radius:6px"></div>
<div class="abs" style="left:2471px;top:949px;width:54px;height:120px;background:#76e8fd;border-radius:6px"></div>
<div class="t" style="left:2000px;width:78px;text-align:right;top:718px;font-size:15px;color:#a9abb8">00:00</div>
<div class="t" style="left:2000px;width:78px;text-align:right;top:755px;font-size:15px;color:#a9abb8">02:00</div>
<div class="t" style="left:2000px;width:78px;text-align:right;top:792px;font-size:15px;color:#a9abb8">04:00</div>
<div class="t" style="left:2000px;width:78px;text-align:right;top:829px;font-size:15px;color:#a9abb8">06:00</div>
<div class="t" style="left:2000px;width:78px;text-align:right;top:866px;font-size:15px;color:#a9abb8">08:00</div>
<div class="t" style="left:2000px;width:78px;text-align:right;top:903px;font-size:15px;color:#a9abb8">10:00</div>
<div class="t" style="left:2000px;width:78px;text-align:right;top:940px;font-size:15px;color:#a9abb8">12:00</div>
<div class="t" style="left:2000px;width:78px;text-align:right;top:978px;font-size:15px;color:#a9abb8">14:00</div>
<div class="t" style="left:2000px;width:78px;text-align:right;top:1015px;font-size:15px;color:#a9abb8">16:00</div>
<div class="t" style="left:2000px;width:78px;text-align:right;top:1052px;font-size:15px;color:#a9abb8">18:00</div>
<div class="t" style="left:2000px;width:78px;text-align:right;top:1089px;font-size:15px;color:#a9abb8">20:00</div>
<div class="t" style="left:2000px;width:78px;text-align:right;top:1126px;font-size:15px;color:#a9abb8">22:00</div>
<div class="t" style="left:2000px;width:78px;text-align:right;top:1163px;font-size:15px;color:#a9abb8">00:00</div>
<div class="abs" style="left:2543px;top:767px;width:7px;height:438px;background:#8e9099;border-radius:4px"></div>
<div class="btn" style="left:2016px;top:1265px;width:251px;height:50px"></div>
<div class="t" style="left:2016px;width:251px;text-align:center;top:1281px;font-size:18px;font-weight:400;color:#eceef2;-webkit-text-stroke:0.7px #eceef2">Смотреть таймлайн</div>
<div class="btn" style="left:2279px;top:1265px;width:251px;height:50px"></div>
<div class="t" style="left:2279px;width:251px;text-align:center;top:1281px;font-size:18px;font-weight:400;color:#eceef2;-webkit-text-stroke:0.7px #eceef2;letter-spacing:-0.2px">Подробный профиль</div>
<div class="abs" style="left:131px;top:1296px;width:40px;height:40px;background:#3d4259;border-radius:5px"></div>
<svg style="left:143px;top:1309px" width="14" height="14" viewBox="0 0 14 14" fill="none" stroke="#eceef2" stroke-width="2.2" stroke-linecap="round" stroke-linejoin="round"><path d="M6.5 1.2 L1.3 7 L6.5 12.8 M12.7 1.2 L7.5 7 L12.7 12.8"/></svg>
<div class="abs" style="left:181px;top:1296px;width:40px;height:40px;background:#3d4259;border-radius:5px"></div>
<svg style="left:196px;top:1309px" width="9" height="14" viewBox="0 0 9 14" fill="none" stroke="#eceef2" stroke-width="2.4" stroke-linecap="round" stroke-linejoin="round"><path d="M7.6 1.2 L1.4 7 L7.6 12.8"/></svg>
<div class="abs" style="left:231px;top:1291px;width:70px;height:50px;background:#1a1c27;border:1px solid #2c3044;border-radius:5px"></div>
<div class="t" style="left:247px;top:1307px;font-size:18px;color:#eceef2">13</div>
<div class="t" style="left:311px;top:1307px;font-size:18px;color:#a9abb8">из 13</div>
<div class="abs" style="left:363px;top:1296px;width:40px;height:40px;background:#2a2d3c;border-radius:5px"></div>
<svg style="left:379px;top:1309px" width="9" height="14" viewBox="0 0 9 14" fill="none" stroke="#5b5e6e" stroke-width="2.4" stroke-linecap="round" stroke-linejoin="round"><path d="M1.4 1.2 L7.6 7 L1.4 12.8"/></svg>
<div class="abs" style="left:413px;top:1296px;width:40px;height:40px;background:#2a2d3c;border-radius:5px"></div>
<svg style="left:427px;top:1309px" width="14" height="14" viewBox="0 0 14 14" fill="none" stroke="#5b5e6e" stroke-width="2.2" stroke-linecap="round" stroke-linejoin="round"><path d="M1.3 1.2 L6.5 7 L1.3 12.8 M7.5 1.2 L12.7 7 L7.5 12.8"/></svg>
<div class="abs" style="left:464px;top:1291px;width:89px;height:50px;background:#1a1c27;border:1px solid #2c3044;border-radius:5px"></div>
<div class="t" style="left:482px;top:1307px;font-size:18px;color:#eceef2">20</div>
<svg style="left:523px;top:1312px" width="15" height="10" viewBox="0 0 15 10" fill="none" stroke="#a3a5b2" stroke-width="2" stroke-linecap="round" stroke-linejoin="round"><path d="M1.3 1.5 L7.3 8.2 L13.3 1.5"/></svg>
<div class="t" style="left:1790px;top:1307px;font-size:18px;color:#eceef2;letter-spacing:-0.2px">Всего: 256</div>
<svg style="left:1903px;top:1304px" width="23" height="23" viewBox="0 0 23 23" fill="none" stroke="#9a9daa" stroke-width="2.2"><rect x="1.3" y="1.3" width="20.4" height="20.4" rx="2"/><path d="M1.3 8 H21.7 M1.3 14.8 H21.7 M11.5 1.3 V21.7"/></svg>
<div class="abs" style="left:80px;top:63px;width:50px;height:1312px;background:linear-gradient(to right,rgba(0,0,0,0.28),rgba(0,0,0,0.12) 30%,rgba(0,0,0,0))"></div>
</body></html>
